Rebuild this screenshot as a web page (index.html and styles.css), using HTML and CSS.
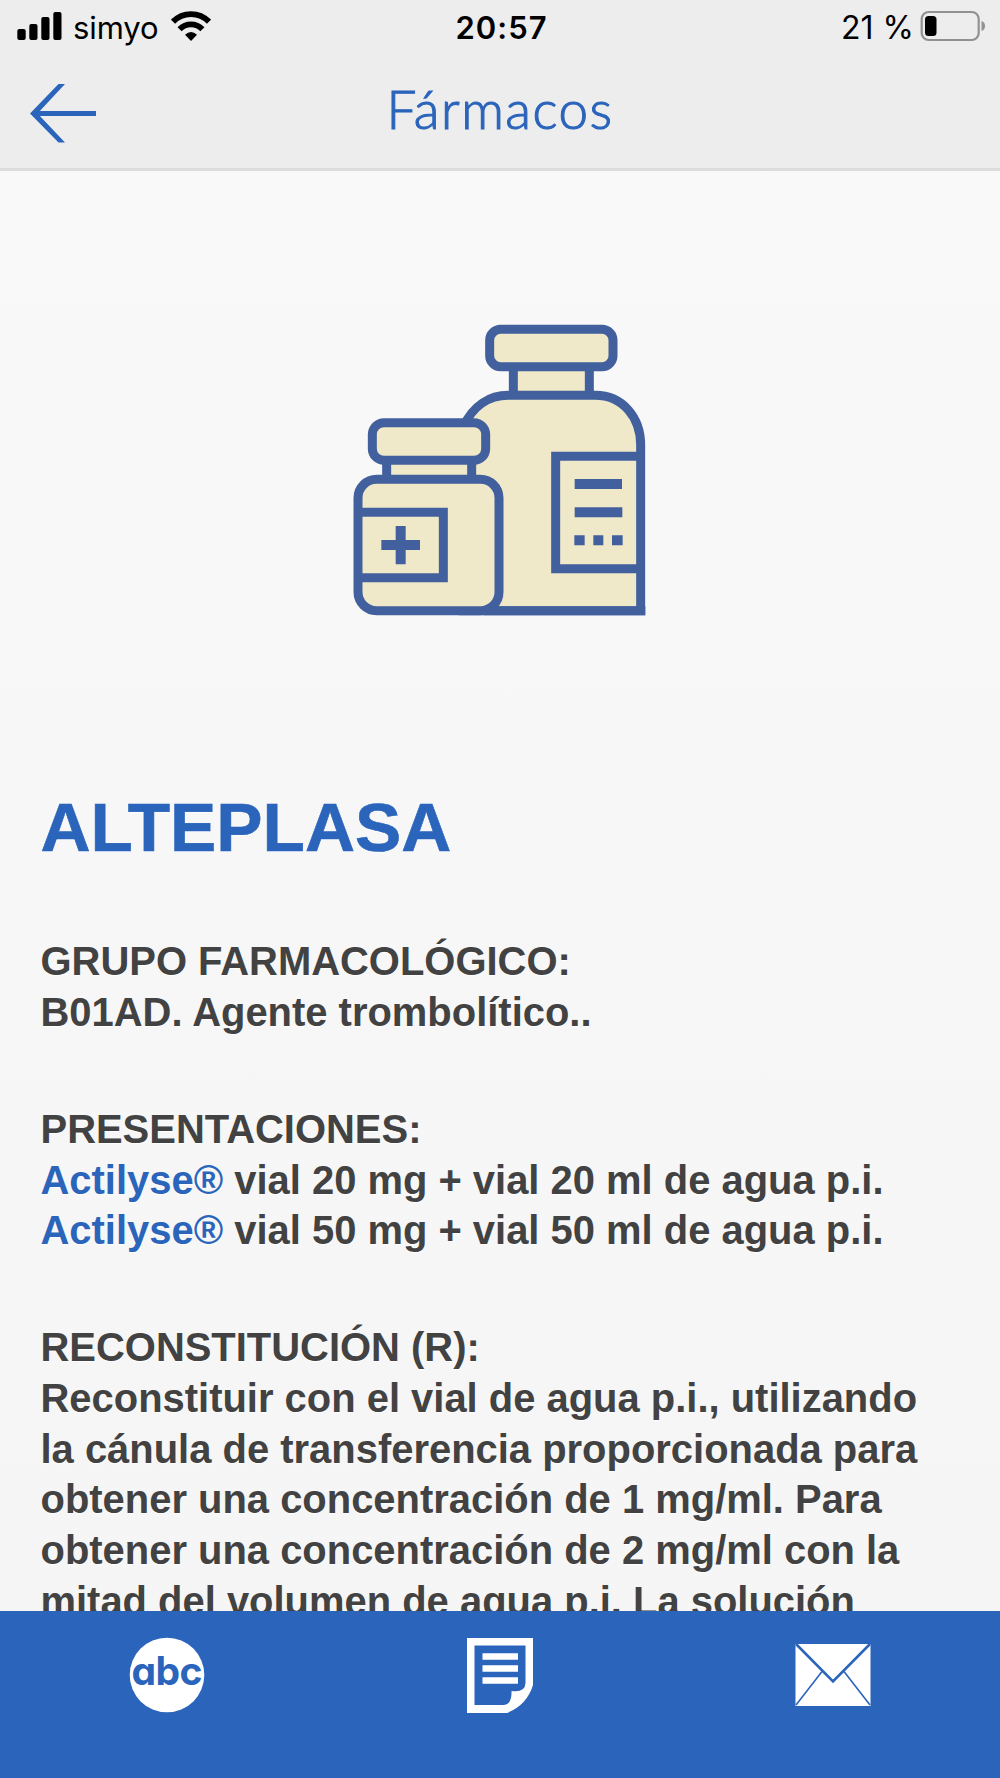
FILE: index.html
```
<!DOCTYPE html>
<html lang="es">
<head>
<meta charset="utf-8">
<title>Fármacos</title>
<link rel="stylesheet" href="styles.css">
</head>
<body>
<div class="app">
  <header class="header">
    <div class="status">
      <div class="status-left">
        <svg class="signal" width="46" height="30" viewBox="0 0 46 30"><rect x="0.3" y="18" width="8.4" height="11" rx="2"/><rect x="12.3" y="13" width="8.2" height="16" rx="2"/><rect x="24.3" y="6" width="8.2" height="23" rx="2"/><rect x="36.3" y="1" width="8.2" height="28" rx="2"/></svg>
        <span class="carrier">simyo</span>
        <svg class="wifi" width="40" height="30" viewBox="0 0 40 30"><g fill="none" stroke="#000"><path d="M2 10.700A25 25 0 0 1 38 10.700" stroke-width="5.800"/><path d="M8.600 18.200A16 16 0 0 1 31.400 18.200" stroke-width="5.800"/></g><path d="M14 23.700Q20 18.500 26 23.700L20 29.900Z"/></svg>
      </div>
      <time class="clock">20:57</time>
      <div class="status-right">
        <span class="percent">21 %</span>
        <svg class="battery" width="66" height="32" viewBox="0 0 66 32"><rect x="1.700" y="2" width="57" height="28" rx="7" fill="none" stroke="#919191" stroke-width="2.200"/><rect x="5" y="6" width="11.500" height="20" rx="3.500"/><path d="M61.500 11Q65 12 65 16T61.500 21Z" fill="#919191"/></svg>
      </div>
    </div>
    <div class="navbar">
      <svg class="back" width="68" height="60" viewBox="0 0 68 60"><path d="M67 30.500H4" stroke="#2b64bb" stroke-width="5"/><path d="M29.500 1H36L8.500 30.500L36 59.500H29.500L1 30.500Z" fill="#2b64bb"/></svg>
      <h1 class="title">Fármacos</h1>
    </div>
  </header>
  <main class="content">
    <svg class="bottles" width="320" height="320" viewBox="0 0 960 960" fill="#f0e9c9" stroke="#42609e" stroke-width="27">
      <path d="M520 165H748V257H520Z"/>
      <rect x="449" y="58" width="370" height="112" rx="33"/>
      <path d="M370 350C400 285 450 256 505 256H765C850 256 902 325 902 405V902H370Z"/>
      <path d="M902 439H647V776H902" fill="none"/>
      <path d="M140 440H395V520H140Z"/>
      <rect x="97" y="338" width="340" height="113" rx="35"/>
      <rect x="54" y="508" width="423" height="394" rx="56"/>
      <path d="M430 902H916" fill="none"/>
      <path d="M54 607H310V803H54" fill="none"/>
      <path d="M124 705H240M182 648V763M704 522H846M704 607H847M703 691H734M760 691H790M816 691H848" fill="none" stroke-width="30"/>
    </svg>
    <h2 class="drug">ALTEPLASA</h2>
    <section class="block">GRUPO FARMACOLÓGICO:<br>B01AD. Agente trombolítico..</section>
    <section class="block">PRESENTACIONES:<br><a class="brand">Actilyse®</a> vial 20 mg + vial 20 ml de agua p.i.<br><a class="brand">Actilyse®</a> vial 50 mg + vial 50 ml de agua p.i.</section>
    <section class="block">RECONSTITUCIÓN (R):<br>Reconstituir con el vial de agua p.i., utilizando<br>la cánula de transferencia proporcionada para<br>obtener una concentración de 1 mg/ml. Para<br>obtener una concentración de 2 mg/ml con la<br>mitad del volumen de agua p.i. La solución</section>
  </main>
  <nav class="tabbar">
    <a class="tab"><svg width="76" height="76" viewBox="0 0 76 76"><circle cx="38" cy="38" r="37.300" fill="#fff"/><text class="abc" x="38" y="48" text-anchor="middle" textLength="71">abc</text></svg></a>
    <a class="tab"><svg width="66" height="76" viewBox="0 0 66 76"><path d="M0 1H66V48Q60 68 40 76H0ZM7.500 8.500V68H37Q45 67 44.500 54Q58 56 58.500 46V8.500Z" fill="#fff" fill-rule="evenodd"/><path d="M15.500 19.500H51M15.500 31.500H51M15.500 43.500H51" stroke="#fff" stroke-width="6.400"/></svg></a>
    <a class="tab"><svg width="76" height="64" viewBox="0 0 76 64"><rect x="0.500" y="1" width="75" height="62" fill="#fff"/><path d="M1 1L38 38.500L75 1" fill="none" stroke="#2b64bb" stroke-width="2.600"/><path d="M27 28.500L1 62M49 28.500L75 62" stroke="#2b64bb" stroke-width="1.600"/></svg></a>
  </nav>
</div>
</body>
</html>
```
FILE: styles.css
```
* { box-sizing: border-box; }
body { margin: 0; }
.app { width: 1000px; height: 1778px; display: flex; flex-direction: column; overflow: hidden; background: linear-gradient(#f9f9f9, #f5f5f5); }
.header { height: 171px; flex: none; background: #ededed; border-bottom: 3px solid #dddddd; }
.status { height: 56px; display: grid; grid-template-columns: 1fr auto 1fr; align-items: center; padding: 0 14px 0 17px; font: 400 31px/56px Inter, "Liberation Sans", sans-serif; color: #000; }
.status-left, .status-right { display: flex; align-items: center; height: 56px; }
.status-right { justify-content: flex-end; }
.carrier { margin: 0 13px 0 10px; letter-spacing: -0.1px; }
.clock { font-weight: 600; letter-spacing: 1px; }
.percent { margin-right: 6px; font-size: 32px; }
.signal, .wifi, .battery { display: block; }
.signal, .wifi { margin-bottom: 4px; }
.battery { margin-bottom: 4px; }
.navbar { height: 112px; display: grid; grid-template-columns: 98px 1fr 98px; align-items: start; }
.back { margin: 27px 0 0 29px; }
.title { margin: 21px 0 0; text-align: center; font: 300 53px/64px Lato, sans-serif; color: #2b64bb; letter-spacing: 1.5px; -webkit-text-stroke: 1.1px #2b64bb; }
.content { flex: 1; min-height: 0; overflow: hidden; padding: 139px 40.5px 0; color: #424242; font: 700 39.95px/50.67px "Liberation Sans", Arial, sans-serif; text-shadow: 0 1px 1px #fff; white-space: nowrap; }
.bottles { display: block; margin: 0 auto; }
.drug { margin: 157px 0 69px; font-size: 69.33px; line-height: 80px; color: #2b64bb; -webkit-text-stroke: 0.6px #2b64bb; }
.block { margin-bottom: 66.5px; }
.brand { color: #2b64bb; }
.tabbar { flex: none; height: 167px; display: grid; grid-template-columns: repeat(3, 1fr); background: #2b64bb; }
.tab { height: 127px; display: flex; align-items: center; justify-content: center; }
.tab svg { display: block; }
.abc { font-family: Inter, sans-serif; font-weight: 700; font-size: 39px; font-feature-settings: "cv11" 1, "ss01" 1; fill: #2b64bb; }
```
